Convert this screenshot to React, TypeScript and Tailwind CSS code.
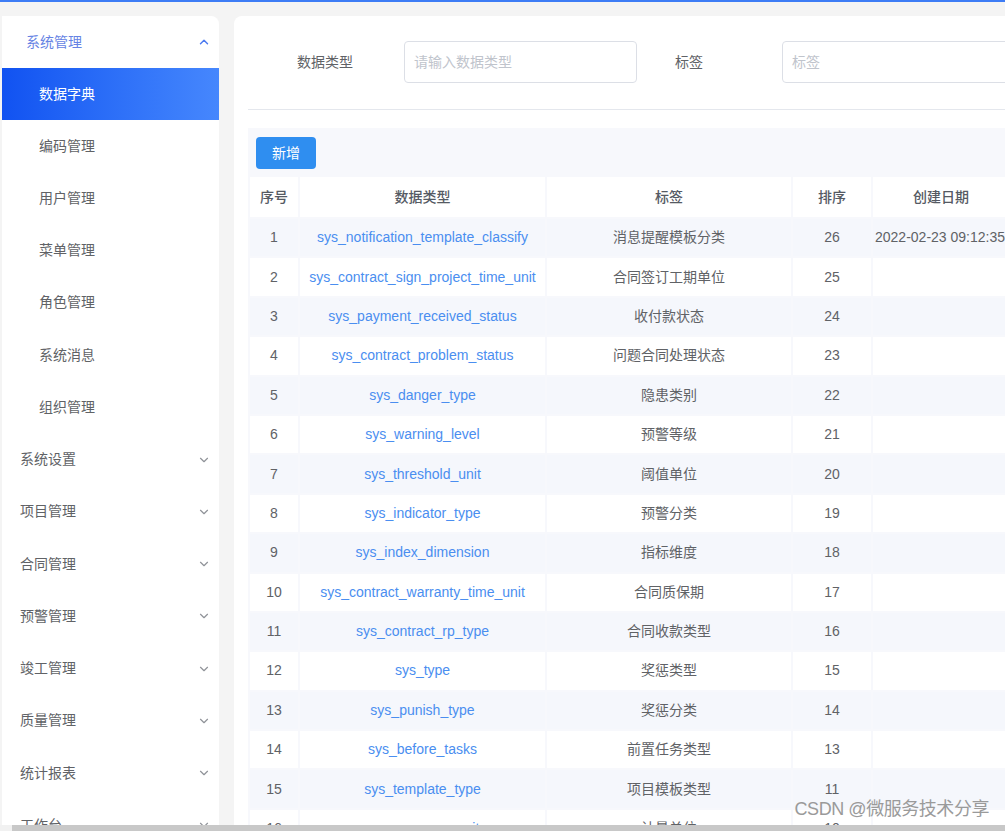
import { ChevronDown, ChevronUp } from 'lucide-react';

const subMenu = ['编码管理', '用户管理', '菜单管理', '角色管理', '系统消息', '组织管理'];
const topMenu = ['系统设置', '项目管理', '合同管理', '预警管理', '竣工管理', '质量管理', '统计报表', '工作台'];

const rows = [
  ['sys_notification_template_classify', '消息提醒模板分类', '26', '2022-02-23 09:12:35'],
  ['sys_contract_sign_project_time_unit', '合同签订工期单位', '25', ''],
  ['sys_payment_received_status', '收付款状态', '24', ''],
  ['sys_contract_problem_status', '问题合同处理状态', '23', ''],
  ['sys_danger_type', '隐患类别', '22', ''],
  ['sys_warning_level', '预警等级', '21', ''],
  ['sys_threshold_unit', '阈值单位', '20', ''],
  ['sys_indicator_type', '预警分类', '19', ''],
  ['sys_index_dimension', '指标维度', '18', ''],
  ['sys_contract_warranty_time_unit', '合同质保期', '17', ''],
  ['sys_contract_rp_type', '合同收款类型', '16', ''],
  ['sys_type', '奖惩类型', '15', ''],
  ['sys_punish_type', '奖惩分类', '14', ''],
  ['sys_before_tasks', '前置任务类型', '13', ''],
  ['sys_template_type', '项目模板类型', '11', ''],
  ['sys_measure_unit', '计量单位', '10', ''],
];

function Sidebar() {
  return (
    <aside className="ml-[2px] w-[217px] shrink-0 bg-white rounded-tr-lg overflow-hidden">
      <div className="h-[52px] flex items-center justify-between pl-[24px] pr-[8px]">
        <span className="text-[14px] text-[#6683e4]">系统管理</span>
        <ChevronUp className="w-[14px] h-[14px] text-[#4f7cf0]" strokeWidth={2.5} />
      </div>
      <div className="h-[52px] flex items-center pl-[37px] text-[14px] text-white bg-gradient-to-r from-[#1152f1] to-[#4687fd]">
        数据字典
      </div>
      {subMenu.map((m) => (
        <div key={m} className="h-[52.25px] flex items-center pl-[37px] text-[14px] text-[#606266]">
          {m}
        </div>
      ))}
      {topMenu.map((m) => (
        <div key={m} className="h-[52.25px] flex items-center justify-between pl-[18px] pr-[8px] text-[14px] text-[#606266]">
          <span>{m}</span>
          <ChevronDown className="w-[14px] h-[14px] text-[#909399]" strokeWidth={2} />
        </div>
      ))}
    </aside>
  );
}

function Filters() {
  return (
    <div className="flex items-center h-[42px] mt-[25px]">
      <span className="ml-[63px] text-[14px] text-[#606266]">数据类型</span>
      <div className="ml-[51px] w-[233px] h-[42px] border border-[#dcdfe6] rounded flex items-center px-[9px] text-[14px] text-[#c0c4cc]">
        请输入数据类型
      </div>
      <span className="ml-[38px] text-[14px] text-[#606266]">标签</span>
      <div className="ml-[79px] w-[233px] h-[42px] border border-[#dcdfe6] rounded flex items-center px-[9px] text-[14px] text-[#c0c4cc]">
        标签
      </div>
    </div>
  );
}

function DictTable() {
  return (
    <div className="mt-[18px] bg-[#f7f8fc]">
      <div className="pt-[9px] pl-[8px] pb-[6px]">
        <button className="w-[60px] h-[32px] rounded bg-[#2f8ef0] text-white text-[14px]">新增</button>
      </div>
      <table className="table-fixed w-[763px] border-separate border-spacing-[2px] text-[14px] text-[#606266] text-center">
        <colgroup>
          <col className="w-[48px]" />
          <col className="w-[245px]" />
          <col className="w-[244px]" />
          <col className="w-[78px]" />
          <col className="w-[136px]" />
        </colgroup>
        <thead>
          <tr>
            {['序号', '数据类型', '标签', '排序', '创建日期'].map((h) => (
              <th key={h} className="h-[40px] bg-white font-medium text-[#555a63] whitespace-nowrap">
                {h}
              </th>
            ))}
          </tr>
        </thead>
        <tbody>
          {rows.map((r, i) => (
            <tr key={r[0]} className={i % 2 === 0 ? 'bg-[#f5f7fc]' : 'bg-white'}>
              <td className="h-[37.4px] p-0">{i + 1}</td>
              <td className="p-0 text-[#4a8ef0] whitespace-nowrap">{r[0]}</td>
              <td className="p-0">{r[1]}</td>
              <td className="p-0">{r[2]}</td>
              <td className="p-0 text-left pl-[2px] whitespace-nowrap">{r[3]}</td>
            </tr>
          ))}
        </tbody>
      </table>
    </div>
  );
}

export default function App() {
  return (
    <div
      className="relative h-[831px] w-[1005px] overflow-hidden bg-[#f4f4f4] border-t-2 border-[#3d7cf5]"
      style={{ fontFamily: '"Liberation Sans", "Noto Sans CJK SC", sans-serif' }}
    >
      <div className="flex h-[823px] pt-[14px] gap-[15px]">
        <Sidebar />
        <main className="flex-1 bg-white rounded-tl-lg overflow-hidden">
          <div className="w-[1000px]">
            <Filters />
            <div className="ml-[14px] mt-[26px] h-px bg-[#e4e7ed]" />
            <div className="ml-[14px]">
              <DictTable />
            </div>
          </div>
        </main>
      </div>
      <div className="flex h-[6px] bg-[#f1f1f1]">
        <div className="w-[12px]" />
        <div className="flex-1 bg-[#c8c8c8]" />
      </div>
      <div className="absolute right-[16px] bottom-[8px] text-[18px] text-[#9a9a9a] tracking-tight">
        CSDN @微服务技术分享
      </div>
    </div>
  );
}
